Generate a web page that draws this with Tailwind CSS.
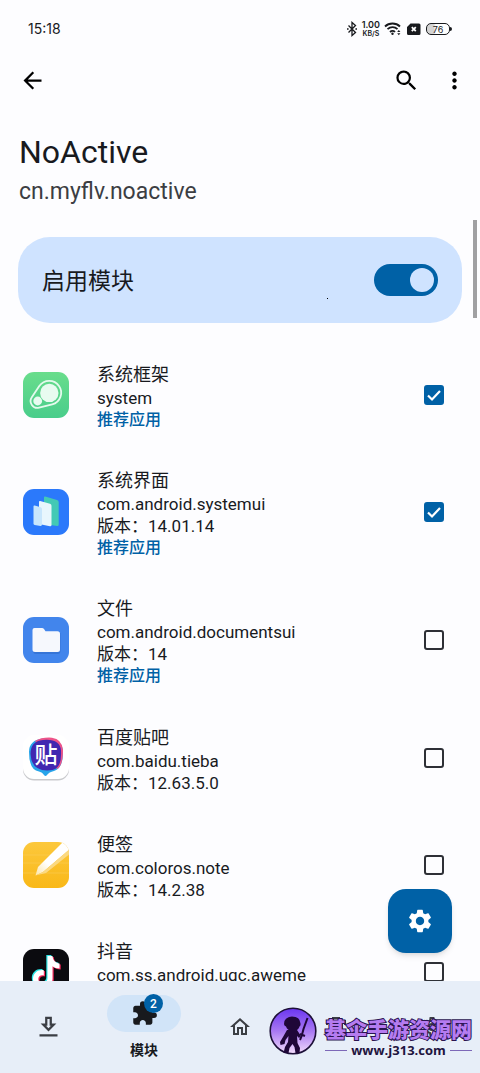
<!DOCTYPE html>
<html lang="zh-CN">
<head>
    <meta charset="UTF-8">
    <meta name="viewport" content="width=device-width, initial-scale=1.0">
    <title>NoActive</title>
    <script src="https://cdn.jsdelivr.net/npm/@tailwindcss/browser@4"></script>
</head>
<body class="relative flex h-screen flex-col overflow-hidden bg-[#fdfdff] font-['Roboto','Noto_Sans_CJK_SC',sans-serif] text-[#181a1e]">

<!-- Status bar -->
<div class="flex h-14 shrink-0 items-center justify-between pt-0.5 pr-7 pl-7">
    <span class="font-['Inter',sans-serif] text-sm">15:18</span>
    <div class="flex items-center gap-1">
        <svg class="h-4 w-3" viewBox="0 0 12 16" fill="none" stroke="#181a1e" stroke-width="1.3">
            <path d="M2.5 4.5l7 7L6 14.5v-13l3.5 3-7 7"/>
            <path d="M1 8h1.6M9.4 8H11"/>
        </svg>
        <div class="text-center font-['Inter',sans-serif] font-semibold">
            <div class="text-[9px] leading-[10px]">1.00</div>
            <div class="text-[7px] leading-[8px]">KB/S</div>
        </div>
        <svg class="h-4 w-[18px]" viewBox="0 0 18 16" fill="none" stroke="#181a1e" stroke-width="1.8">
            <path d="M1 5.5c4-4 11-4 15 0M3.5 8.2c3-2.8 7.2-2.8 10 0M6 11c1.6-1.5 3.6-1.5 5 0"/>
            <circle cx="8.5" cy="12.8" r="1.2" fill="#181a1e" stroke="none"/>
            <path d="M13.2 11l1.6-2 1.6 2zM13.2 12.2l1.6 2 1.6-2z" fill="#181a1e" stroke="none"/>
        </svg>
        <svg class="h-4 w-4" viewBox="0 0 16 16">
            <path d="M4.5 2.5H13A1.5 1.5 0 0114.500 4v8.500A1.500 1.500 0 0113 14H2.500A1.500 1.500 0 011 12.500V6z" fill="#181a1e"/>
            <path d="M5.8 6.2l4 4M9.8 6.2l-4 4" stroke="#fff" stroke-width="1.8"/>
        </svg>
        <div class="flex items-center">
            <div class="flex h-3 w-6 items-center justify-center rounded-[5px] border border-[#181a1e] bg-linear-to-r from-[#d4d4d4] from-30% to-white to-40% font-['Inter',sans-serif] text-[9px] leading-none">76</div>
            <div class="h-1 w-0.5 rounded-r bg-[#181a1e]"></div>
        </div>
    </div>
</div>

<!-- App bar -->
<header class="flex h-12 shrink-0 items-center pr-3 pl-[19px]">
    <button aria-label="返回" class="mr-auto">
        <svg class="size-[27px]" viewBox="0 0 24 24"><path d="M20 11H7.830l5.590-5.590L12 4l-8 8 8 8 1.410-1.410L7.830 13H20v-2z"/></svg>
    </button>
    <button aria-label="搜索" class="mr-[21px]">
        <svg class="size-[27px]" viewBox="0 0 24 24"><path d="M15.500 14h-.79l-.28-.27A6.471 6.471 0 0016 9.500 6.500 6.500 0 109.500 16c1.610 0 3.090-.59 4.230-1.570l.27.28v.79l5 4.990L20.490 19l-4.990-5zm-6 0C7.010 14 5 11.990 5 9.500S7.010 5 9.500 5 14 7.010 14 9.500 11.990 14 9.500 14z"/></svg>
    </button>
    <button aria-label="更多">
        <svg class="size-[27px]" viewBox="0 0 24 24"><path d="M12 8c1.100 0 2-.9 2-2s-.9-2-2-2-2 .9-2 2 .9 2 2 2zm0 2c-1.100 0-2 .9-2 2s.9 2 2 2 2-.9 2-2-.9-2-2-2zm0 6c-1.100 0-2 .9-2 2s.9 2 2 2 2-.9 2-2-.9-2-2-2z"/></svg>
    </button>
</header>

<main class="relative min-h-0 flex-1 overflow-hidden pt-7">
    <div class="px-[19px]">
        <h1 class="text-[32px] leading-10">NoActive</h1>
        <p class="text-[23px] leading-10 text-[#3c3e43]">cn.myflv.noactive</p>
    </div>

    <label class="relative mx-[18px] mt-[25px] flex h-[86px] items-center justify-between rounded-[32px] bg-[#cfe3ff] px-6">
        <span class="pt-1 text-[23px]">启用模块</span>
        <input type="checkbox" role="switch" checked class="peer sr-only">
        <span class="flex h-8 w-16 items-center justify-end rounded-full bg-[#0061a6] px-1">
            <span class="size-6 rounded-full bg-[#cfe3ff]"></span>
        </span>
        <span class="absolute top-[61px] left-[309px] size-px bg-black"></span>
    </label>

    <ul class="mt-[18px]">
        <li>
            <label class="flex min-h-[107px] items-center py-[17px] pr-9 pl-[23px]">
                <svg class="size-[46px]" viewBox="0 0 46 46">
                    <defs>
                        <linearGradient id="green" x1="0" y1="0" x2="0" y2="1"><stop offset="0" stop-color="#69dd8c"/><stop offset="1" stop-color="#49cd8b"/></linearGradient>
                    </defs>
                    <rect width="46" height="46" rx="11" fill="url(#green)"/>
                    <path d="M16.3 14A12 12 0 1129.2 32.4L16.1 35.6A6.8 6.8 0 018.8 25.2z" fill="none" stroke="#e4faed" stroke-width="1.8"/>
                    <circle cx="26.3" cy="20.9" r="9.2" fill="#e8fbf0"/>
                    <circle cx="14.7" cy="29" r="4.4" fill="#e8fbf0"/>
                </svg>
                <span class="ml-7 flex flex-1 flex-col pt-1 text-[17px] leading-[22px]">
                    <span class="text-lg leading-6">系统框架</span>
                    <span>system</span>
                    <span class="text-base leading-[22px] font-medium text-[#0061a6]">推荐应用</span>
                </span>
                <span class="grid place-items-center">
                    <input type="checkbox" checked class="col-start-1 row-start-1 size-5 appearance-none rounded-[3px] border-2 border-[#2e3036] checked:border-[#0061a6] checked:bg-[#0061a6]">
                    <svg class="pointer-events-none col-start-1 row-start-1 size-5" viewBox="0 0 20 20" fill="none" stroke="#fff" stroke-width="2.2"><path d="M4 10.500l4 4 8-8.500"/></svg>
                </span>
            </label>
        </li>
        <li>
            <label class="flex min-h-[107px] items-center py-[17px] pr-9 pl-[23px]">
                <svg class="size-[46px]" viewBox="0 0 46 46">
                    <rect width="46" height="46" rx="11" fill="#2b79fb"/>
                    <path d="M21 8.500q0-1.200 1.200-1L34 11q1.700.5 1.700 2v22.500q0 1.700-1.500 1.500L21 35z" fill="#43c9b5"/>
                    <path d="M16 13q0-1.200 1.200-.9l9.800 2.600q1.500.5 1.500 2V36q0 1.500-1.500 1.300L16 35z" fill="#e8f6fd"/>
                    <path d="M10.500 17.500q0-1.200 1.200-.9l6 1.600q1.300.4 1.300 1.800v15.500q0 1.500-1.500 1.400l-5.800-.9q-1.200-.2-1.200-1.500z" fill="#c8e6fc"/>
                </svg>
                <span class="ml-7 flex flex-1 flex-col pt-1 text-[17px] leading-[22px]">
                    <span class="text-lg leading-6">系统界面</span>
                    <span>com.android.systemui</span>
                    <span>版本：14.01.14</span>
                    <span class="text-base leading-[22px] font-medium text-[#0061a6]">推荐应用</span>
                </span>
                <span class="grid place-items-center">
                    <input type="checkbox" checked class="col-start-1 row-start-1 size-5 appearance-none rounded-[3px] border-2 border-[#2e3036] checked:border-[#0061a6] checked:bg-[#0061a6]">
                    <svg class="pointer-events-none col-start-1 row-start-1 size-5" viewBox="0 0 20 20" fill="none" stroke="#fff" stroke-width="2.2"><path d="M4 10.500l4 4 8-8.500"/></svg>
                </span>
            </label>
        </li>
        <li>
            <label class="flex min-h-[107px] items-center py-[17px] pr-9 pl-[23px]">
                <svg class="size-[46px]" viewBox="0 0 46 46">
                    <rect width="46" height="46" rx="11" fill="#4285ec"/>
                    <path d="M10 16h27.500v18q0 3-3 3H13q-3 0-3-3z" fill="#2f6bc9" opacity=".6"/>
                    <path d="M9.500 13q0-2 2-2h7.500q1.200 0 2 1l1.500 2.200h12q2.500 0 2.500 2.500v15.800q0 2.500-2.500 2.500H12q-2.500 0-2.500-2.500z" fill="#f6f8fd"/>
                </svg>
                <span class="ml-7 flex flex-1 flex-col pt-1 text-[17px] leading-[22px]">
                    <span class="text-lg leading-6">文件</span>
                    <span>com.android.documentsui</span>
                    <span>版本：14</span>
                    <span class="text-base leading-[22px] font-medium text-[#0061a6]">推荐应用</span>
                </span>
                <input type="checkbox" class="size-5 appearance-none rounded-[3px] border-2 border-[#2e3036] checked:bg-[#0061a6]">
            </label>
        </li>
        <li>
            <label class="flex min-h-[107px] items-center py-[17px] pr-9 pl-[23px]">
                <svg class="size-[46px]" viewBox="0 0 46 46">
                    <rect y="6" width="46" height="39.500" rx="11" fill="#c9cacd"/>
                    <rect width="46" height="44" rx="11" fill="#fff"/>
                    <path d="M6 17Q6 5 20 3.500q18-1.500 20 12 .5 18-9 20.500-5 1-7 4-1.500 2-3 0-1.500-3-5-3.500Q6 35 6 17z" fill="#28a5ea"/>
                    <path d="M12 6Q19 2 29 2.700 39 4 40 15q0 16-6 19z" fill="#ee5389"/>
                    <path d="M7.500 19Q7.500 6 20 5q17-1.500 18 10.500 1 17.500-8.500 19.500Q8.500 38 7.500 19z" fill="#4227b0"/>
                    <text x="23" y="28" font-size="23" font-weight="500" fill="#fff" text-anchor="middle" font-family="Noto Sans CJK SC, sans-serif">贴</text>
                </svg>
                <span class="ml-7 flex flex-1 flex-col pt-1 text-[17px] leading-[22px]">
                    <span class="text-lg leading-6">百度贴吧</span>
                    <span>com.baidu.tieba</span>
                    <span>版本：12.63.5.0</span>
                </span>
                <input type="checkbox" class="size-5 appearance-none rounded-[3px] border-2 border-[#2e3036] checked:bg-[#0061a6]">
            </label>
        </li>
        <li>
            <label class="flex min-h-[107px] items-center py-[17px] pr-9 pl-[23px]">
                <svg class="size-[46px]" viewBox="0 0 46 46">
                    <defs>
                        <linearGradient id="yellow" x1="0" y1="0" x2="0" y2="1"><stop offset="0" stop-color="#fcc83c"/><stop offset="1" stop-color="#f9b818"/></linearGradient>
                        <linearGradient id="pen" x1="1" y1="0" x2="0" y2="1"><stop offset="0" stop-color="#fff"/><stop offset=".65" stop-color="#fff"/><stop offset="1" stop-color="#fde6a8"/></linearGradient>
                        <clipPath id="noteClip"><rect width="46" height="46" rx="11"/></clipPath>
                    </defs>
                    <g clip-path="url(#noteClip)">
                        <rect width="46" height="46" fill="url(#yellow)"/>
                        <path d="M0 13h46M0 21h46M0 31h46" stroke="#fccd55" stroke-width=".6"/>
                        <path d="M12.500 33.500L15 25 40 0h8v6L20 30z" fill="url(#pen)"/>
                        <path d="M12.500 33.500L20 30 48 6v5L23 31z" fill="#fbd980"/>
                    </g>
                </svg>
                <span class="ml-7 flex flex-1 flex-col pt-1 text-[17px] leading-[22px]">
                    <span class="text-lg leading-6">便签</span>
                    <span>com.coloros.note</span>
                    <span>版本：14.2.38</span>
                </span>
                <input type="checkbox" class="size-5 appearance-none rounded-[3px] border-2 border-[#2e3036] checked:bg-[#0061a6]">
            </label>
        </li>
        <li>
            <label class="flex min-h-[107px] items-center py-[17px] pr-9 pl-[23px]">
                <svg class="size-[46px]" viewBox="0 0 46 46">
                    <defs>
                        <path id="note" d="M24.500 7h5c.5 4.500 3 7 7 7.500v5c-3 0-5-.8-7-2.200v12.200c0 12-19.500 12-19.500.5 0-6 5-9.500 10.800-8.800v5.300c-3-.8-5.500.8-5.500 3.500 0 5.500 9.200 5 9.200-.8z"/>
                    </defs>
                    <rect width="46" height="46" rx="11" fill="#0b0b0f"/>
                    <use href="#note" x="-1.200" y="-1" fill="#2ce6e6"/>
                    <use href="#note" x="1.200" y="1" fill="#f5295b"/>
                    <use href="#note" fill="#fff"/>
                </svg>
                <span class="ml-7 flex flex-1 flex-col pt-1 text-[17px] leading-[22px]">
                    <span class="text-lg leading-6">抖音</span>
                    <span>com.ss.android.ugc.aweme</span>
                    <span>&nbsp;</span>
                </span>
                <input type="checkbox" class="size-5 appearance-none rounded-[3px] border-2 border-[#2e3036] checked:bg-[#0061a6]">
            </label>
        </li>
    </ul>

    <!-- Scroll thumb -->
    <div class="absolute top-[116px] right-[3px] h-[98px] w-1 bg-[#a0a0a2]"></div>

    <button aria-label="设置" class="absolute right-7 bottom-7 grid size-16 place-items-center rounded-[18px] bg-[#0061a6] shadow-md">
        <svg class="size-7" viewBox="0 0 24 24" fill="#fff"><path d="M19.140 12.940c.04-.3.06-.61.06-.94 0-.32-.02-.64-.07-.94l2.030-1.580c.18-.14.23-.41.12-.61l-1.920-3.320c-.12-.22-.37-.29-.59-.22l-2.390.96c-.5-.38-1.030-.7-1.620-.94l-.36-2.540c-.04-.24-.24-.41-.48-.41h-3.840c-.24 0-.43.17-.47.41l-.36 2.540c-.59.24-1.130.57-1.620.94l-2.390-.96c-.22-.08-.47 0-.59.22L2.740 8.870c-.12.21-.08.47.12.61l2.030 1.580c-.05.3-.09.63-.09.94s.02.64.07.94l-2.030 1.580c-.18.14-.23.41-.12.61l1.920 3.320c.12.22.37.29.59.22l2.390-.96c.5.38 1.030.7 1.620.94l.36 2.540c.05.24.24.41.48.41h3.840c.24 0 .44-.17.47-.41l.36-2.540c.59-.24 1.130-.56 1.620-.94l2.390.96c.22.08.47 0 .59-.22l1.920-3.320c.12-.22.07-.47-.12-.61l-2.010-1.580zM12 15.600c-1.980 0-3.600-1.620-3.600-3.600s1.620-3.600 3.600-3.600 3.600 1.620 3.600 3.600-1.620 3.600-3.600 3.600z"/></svg>
    </button>
</main>

<!-- Bottom navigation -->
<nav class="relative grid h-[92px] shrink-0 grid-cols-5 bg-[#e7eef8]">
    <a href="#" aria-label="下载" class="grid place-items-center">
        <svg class="size-[27px]" viewBox="0 0 24 24" fill="#3b3e44"><path d="M19 8.500h-4v-6H9v6H5l7 7 7-7zm-8 2v-6h2v6h1.170L12 12.670 9.830 10.500H11zM4 18h16v2H4z"/></svg>
    </a>
    <a href="#" class="flex flex-col items-center gap-1.5 pt-3.5">
        <span class="relative grid h-[37px] w-[74px] place-items-center rounded-full bg-[#d1e4f8]">
            <svg class="size-[27px]" viewBox="0 0 24 24" fill="#181a1e"><path d="M20.500 11H19V7c0-1.100-.9-2-2-2h-4V3.500a2.500 2.500 0 00-5 0V5H4c-1.100 0-1.990.9-1.990 2v3.800H3.500c1.490 0 2.700 1.210 2.700 2.700s-1.210 2.700-2.700 2.700H2V20c0 1.100.9 2 2 2h3.800v-1.500c0-1.490 1.210-2.700 2.700-2.700s2.700 1.210 2.700 2.700V22H17c1.100 0 2-.9 2-2v-4h1.500a2.500 2.500 0 000-5z"/></svg>
            <span class="absolute -top-px right-[18px] grid size-[19px] place-items-center rounded-full bg-[#0061a6] text-xs leading-none font-medium text-white">2</span>
        </span>
        <span class="text-sm leading-6 font-bold">模块</span>
    </a>
    <a href="#" aria-label="主页" class="grid place-items-center">
        <svg class="size-6" viewBox="0 0 24 24" fill="#3b3e44"><path d="M12 5.690l5 4.500V18h-2v-6H9v6H7v-7.810l5-4.500M12 3L2 12h3v8h6v-6h2v6h6v-8h3L12 3z"/></svg>
    </a>
    <a href="#" aria-label="应用" class="grid place-items-center">
        <svg class="size-6" viewBox="0 0 24 24" fill="none" stroke="#3b3e44" stroke-width="2"><path d="M9 6V3h6v3M3 10V6h18v4M6 9v11h12V9"/></svg>
    </a>
    <a href="#" aria-label="设置" class="grid place-items-center">
        <svg class="size-6" viewBox="0 0 24 24" fill="none" stroke="#3b3e44" stroke-width="2"><path d="M10.500 3h3l.5 3 2 1 3-1 1.500 2.600-2.300 2v2.800l2.300 2-1.500 2.600-3-1-2 1-.5 3h-3l-.5-3-2-1-3 1-1.500-2.600 2.300-2v-2.800l-2.300-2L5 6l3 1 2-1z"/><circle cx="12" cy="12" r="3"/></svg>
    </a>

    <!-- Site mark laid over the bar -->
    <div class="pointer-events-none absolute right-2 bottom-[15px] flex items-center gap-2">
        <svg class="size-12" viewBox="0 0 48 48">
            <defs>
                <linearGradient id="disc" x1="0" y1="0" x2="0" y2="1"><stop offset="0" stop-color="#6a35f0"/><stop offset=".5" stop-color="#a878f2"/><stop offset="1" stop-color="#f3dcfb"/></linearGradient>
            </defs>
            <circle cx="24" cy="24" r="22.800" fill="url(#disc)" stroke="#1d1038" stroke-width="1.600"/>
            <g fill="#1f0738">
                <path d="M15 17q0-7 8-7.500 8 0 8.500 7 .5 2-1 3-1 4-6.500 4.500-6-.5-7-4.500-2-1-2-2.500z"/>
                <path d="M18 23h10l4 6-2 2-2-2 .5 7 2.500 5-.5 5h-4l-1-6-2-3-3 4-1 5h-5l1.500-6 3-5 .5-6-3 4-1 4-4 1-.5-3 3-5z"/>
            </g>
            <path d="M31 33q2-4 3.500-11l4-11M31 27l5 2" fill="none" stroke="#1f0738" stroke-width="2"/>
        </svg>
        <div class="flex flex-col gap-0.5 pt-3">
            <span class="font-['Noto_Sans_CJK_SC',sans-serif] text-[21px] leading-6 font-black text-[#b57cf0] [-webkit-text-stroke:2px_#2a1450] [paint-order:stroke_fill]">基伞手游资源网</span>
            <span class="flex items-center gap-1 font-['Open_Sans',sans-serif] text-[13px] leading-4 font-bold text-[#1f1440]">
                <span class="h-px flex-1 bg-[#7d68b8]"></span>
                www.j313.com
                <span class="h-px flex-1 bg-[#7d68b8]"></span>
            </span>
        </div>
    </div>
</nav>
</body>
</html>
